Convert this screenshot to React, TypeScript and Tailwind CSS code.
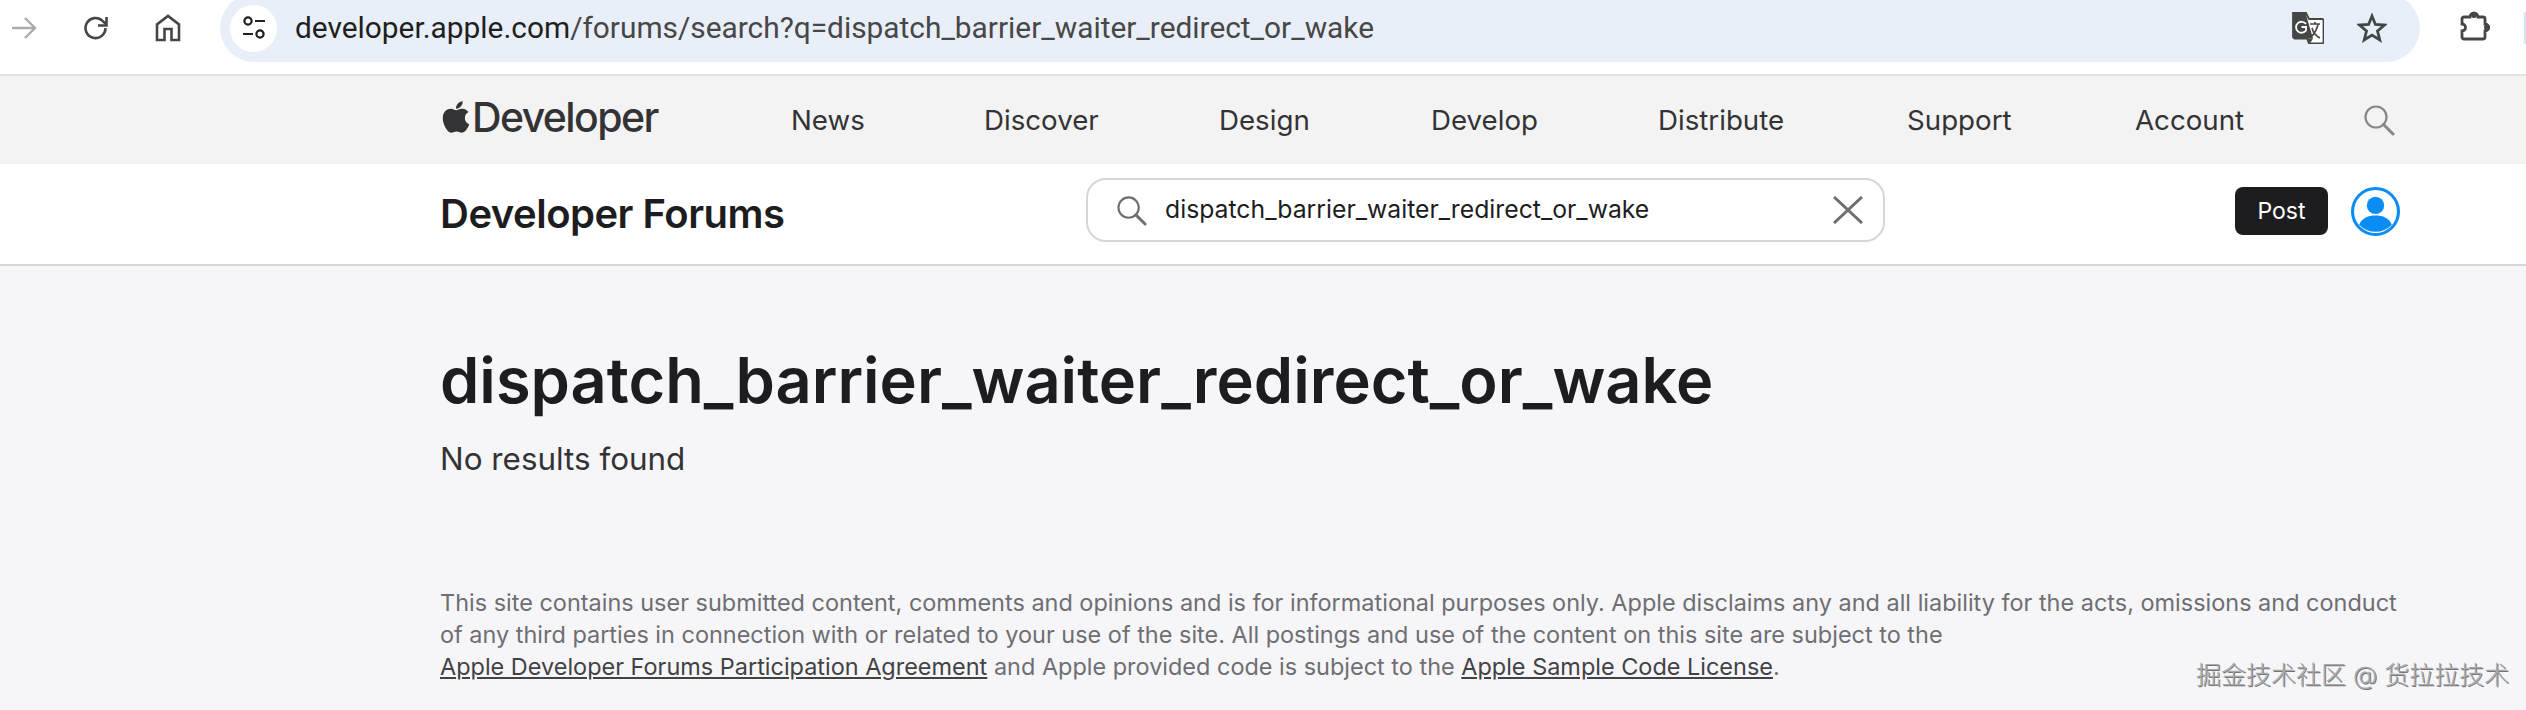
import { FaApple } from "react-icons/fa";

const nav = [
  { label: "News", cls: "w-[193px]" },
  { label: "Discover", cls: "w-[235px]" },
  { label: "Design", cls: "w-[212px]" },
  { label: "Develop", cls: "w-[227px]" },
  { label: "Distribute", cls: "w-[249px]" },
  { label: "Support", cls: "w-[228px]" },
  { label: "Account", cls: "w-[228px]" },
];

function Search({ className }: { className: string }) {
  return (
    <svg viewBox="0 0 32 32" fill="none" className={className}>
      <circle cx="13" cy="13" r="10.5" stroke="currentColor" strokeWidth="2.2" />
      <path d="M20.5 20.5 30 30" stroke="currentColor" strokeWidth="3" strokeLinecap="round" />
    </svg>
  );
}

export default function App() {
  return (
    <div className="relative w-[2526px] h-[710px] overflow-hidden bg-[#f6f6f8] font-['Inter','Noto_Sans_CJK_SC',sans-serif]">
      {/* browser toolbar */}
      <div className="flex h-[76px] items-start overflow-hidden border-b-2 border-[#e4e4e4] bg-white">
        <div className="flex h-[56px] items-center pl-[11px]">
          <svg viewBox="0 0 26 24" fill="none" className="h-[24px] w-[26px] text-[#ababab]">
            <path d="M1 12h23M14 2l10 10-10 10" stroke="currentColor" strokeWidth="2.4" />
          </svg>
          <svg viewBox="0 0 26 26" fill="none" className="ml-[46px] h-[26px] w-[26px] text-[#444746]">
            <path d="M22.5 13a10 10 0 1 1-3-7.1L23 9" stroke="currentColor" strokeWidth="2.6" />
            <path d="M23.5 2v8.5H15" stroke="currentColor" strokeWidth="2.6" />
          </svg>
          <svg viewBox="0 0 26 28" fill="none" className="ml-[46px] h-[28px] w-[26px] text-[#444746]">
            <path d="M2 26V10.5L13 2l11 8.500V26h-7.500V15h-7v11Z" stroke="currentColor" strokeWidth="2.6" />
          </svg>
        </div>
        <div className="ml-[39px] -mt-[6px] flex h-[68px] w-[2200px] items-center rounded-[34px] bg-[#e9eff8] pl-[10px] pr-[33px]">
          <div className="flex h-[47px] w-[47px] shrink-0 items-center justify-center rounded-full bg-white">
            <svg viewBox="0 0 26 26" fill="none" className="h-[26px] w-[26px] text-[#1f1f1f]">
              <circle cx="7" cy="6" r="3.600" stroke="currentColor" strokeWidth="2.200" />
              <path d="M14 6h10M2 19h10" stroke="currentColor" strokeWidth="2.200" />
              <circle cx="19" cy="19" r="3.600" stroke="currentColor" strokeWidth="2.200" />
            </svg>
          </div>
          <div className="ml-[18px] flex-1 whitespace-nowrap font-['Roboto',sans-serif] text-[29.85px] text-[#1f1f1f]">
            developer.apple.com<span className="text-[#474747]">/forums/search?q=dispatch_barrier_waiter_redirect_or_wake</span>
          </div>
          <svg viewBox="0 0 32 32" className="h-[32px] w-[32px]">
            <path d="M1 1h13l3 6h13a1.500 1.500 0 0 1 1.500 1.500V30a1.500 1.500 0 0 1-1.500 1.500H17l-2-5H3a2 2 0 0 1-2-2Z" fill="#fff" stroke="#444746" strokeWidth="1.800" />
            <path d="M1 3a2 2 0 0 1 2-2h10.500L21 26.500H3a2 2 0 0 1-2-2Z" fill="#444746" />
            <path d="M15 26.500h6l-3 5Z" fill="#444746" />
            <path d="M14 12a5.500 5.500 0 1 0 0 6.500V15H9.500" fill="none" stroke="#fff" strokeWidth="1.800" />
            <path d="M18 12h10M23 10v2M26 12c-1 6-4 10-7 13M20 16c1 4 4 8 8 10" fill="none" stroke="#444746" strokeWidth="1.600" />
          </svg>
          <svg viewBox="0 0 30 30" fill="none" className="ml-[33px] h-[30px] w-[30px] text-[#444746]">
            <path d="m15 3 3.400 8.500 9.100.6-7 5.900 2.300 8.900L15 22.100 7.200 26.900l2.300-8.900-7-5.900 9.100-.6Z" stroke="currentColor" strokeWidth="2.800" />
          </svg>
        </div>
        <svg viewBox="0 0 32 32" fill="none" className="ml-[38px] mt-[10px] h-[32px] w-[32px] text-[#444746]">
          <path d="M6 7h6a4 4 0 0 1 8 0h5a2 2 0 0 1 2 2v5a3.500 3.500 0 0 1 0 7v6a2 2 0 0 1-2 2H6a2 2 0 0 1-2-2v-6a3.500 3.500 0 0 0 0-7V9a2 2 0 0 1 2-2Z" stroke="currentColor" strokeWidth="2.800" />
          <circle cx="16" cy="5" r="3" fill="currentColor" />
          <circle cx="29" cy="17.500" r="3" fill="currentColor" />
        </svg>
        <div className="ml-[34px] mt-[12px] h-[32px] w-[2px] bg-[#d3e3fd]" />
      </div>

      {/* site nav */}
      <div className="flex h-[88px] items-center bg-[#f3f3f3] pl-[441px]">
        <div className="flex w-[350px] items-center text-[#333336]">
          <FaApple className="-ml-[1px] -mt-[6px] h-[36px] w-[32px] shrink-0" />
          <span className="-mt-[5px] text-[41px] font-medium leading-none tracking-[-1.6px]">Developer</span>
        </div>
        {nav.map((n) => (
          <div key={n.label} className={`${n.cls} pt-[2px] text-[27.7px] text-[#333336]`}>
            {n.label}
          </div>
        ))}
        <Search className="h-[32px] w-[32px] text-[#86868b]" />
      </div>

      {/* forums bar */}
      <div className="flex h-[102px] items-start border-b-2 border-[#d6d6d6] bg-white pl-[440px] pt-[14px]">
        <div className="mt-[4px] flex h-[64px] w-[646px] items-center text-[40px] font-semibold tracking-[-0.5px] text-[#1d1d1f]">Developer Forums</div>
        <div className="flex h-[64px] w-[799px] items-center rounded-[20px] border-2 border-[#d6d6d6] pl-[28px] pr-[20px]">
          <Search className="h-[31px] w-[31px] text-[#6e6e73]" />
          <div className="ml-[18px] flex-1 text-[24.75px] text-[#1d1d1f]">dispatch_barrier_waiter_redirect_or_wake</div>
          <svg viewBox="0 0 30 28" fill="none" className="h-[28px] w-[30px] text-[#6e6e73]">
            <path d="m1 1 28 26M29 1 1 27" stroke="currentColor" strokeWidth="3" />
          </svg>
        </div>
        <div className="ml-[350px] mt-[9px] flex h-[48px] w-[93px] items-center justify-center rounded-[8px] bg-[#1d1d1f] text-[23px] text-white">Post</div>
        <svg viewBox="0 0 48 48" className="ml-[23px] mt-[9px] h-[49px] w-[49px]">
          <circle cx="24" cy="24" r="22.500" fill="#fff" stroke="#0a8cf5" strokeWidth="3" />
          <circle cx="24" cy="18" r="8.500" fill="#0a8cf5" />
          <path d="M8 37c3-7 9-9 16-9s13 2 16 9a22 22 0 0 1-32 0Z" fill="#0a8cf5" />
        </svg>
      </div>

      {/* main */}
      <div className="pl-[440px]">
        <h1 className="mt-[74px] text-[63.1px] font-semibold leading-[80px] text-[#1d1d1f]">dispatch_barrier_waiter_redirect_or_wake</h1>
        <p className="mt-[18px] text-[31.4px] leading-[42px] text-[#333336]">No results found</p>
        <div className="mt-[107px] w-[1970px] text-[23.46px] leading-[32px] text-[#6e6e73]">
          <div className="whitespace-nowrap">This site contains user submitted content, comments and opinions and is for informational purposes only. Apple disclaims any and all liability for the acts, omissions and conduct</div>
          <div className="whitespace-nowrap">of any third parties in connection with or related to your use of the site. All postings and use of the content on this site are subject to the</div>
          <div className="whitespace-nowrap">
            <span className="text-[#424245] underline">Apple Developer Forums Participation Agreement</span> and Apple provided code is subject to the <span className="text-[#424245] underline">Apple Sample Code License</span>.
          </div>
        </div>
      </div>

      {/* watermark */}
      <div className="absolute left-[2196px] top-[660px] whitespace-nowrap text-[25px] font-light leading-[30px] text-[#a8a8ab] [text-shadow:1px_1px_0_#777]">掘金技术社区 @ 货拉拉技术</div>
    </div>
  );
}
